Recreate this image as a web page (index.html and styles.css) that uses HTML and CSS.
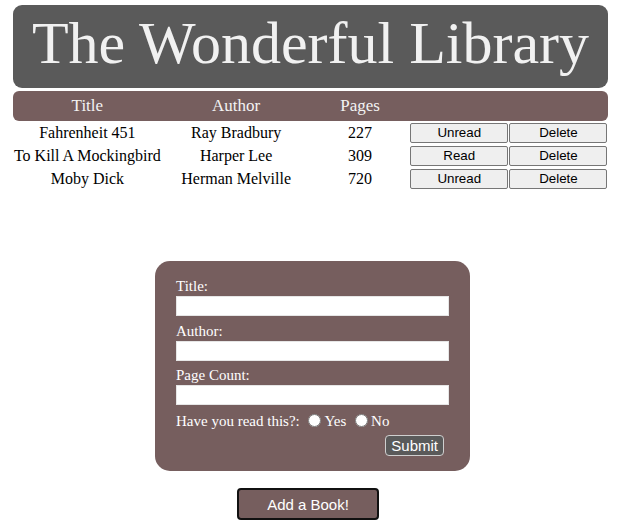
FILE: index.html
```html
<!DOCTYPE html>
<html>
<head>
<meta charset="utf-8">
<title>The Wonderful Library</title>
<link rel="stylesheet" href="styles.css">
</head>
<body>
<div class="page">
  <header class="banner">
    <h1 class="banner-title">The Wonderful Library</h1>
  </header>

  <section class="books">
    <div class="books-head">
      <div class="cell">Title</div>
      <div class="cell">Author</div>
      <div class="cell">Pages</div>
      <div class="cell"></div>
      <div class="cell"></div>
    </div>
    <div class="book-row">
      <div class="cell">Fahrenheit 451</div>
      <div class="cell">Ray Bradbury</div>
      <div class="cell">227</div>
      <button class="row-btn">Unread</button>
      <button class="row-btn">Delete</button>
    </div>
    <div class="book-row">
      <div class="cell">To Kill A Mockingbird</div>
      <div class="cell">Harper Lee</div>
      <div class="cell">309</div>
      <button class="row-btn">Read</button>
      <button class="row-btn">Delete</button>
    </div>
    <div class="book-row">
      <div class="cell">Moby Dick</div>
      <div class="cell">Herman Melville</div>
      <div class="cell">720</div>
      <button class="row-btn">Unread</button>
      <button class="row-btn">Delete</button>
    </div>
  </section>

  <form class="book-form">
    <label class="field-label" for="title">Title:</label>
    <input class="field-input" id="title" type="text">
    <label class="field-label" for="author">Author:</label>
    <input class="field-input" id="author" type="text">
    <label class="field-label" for="pages">Page Count:</label>
    <input class="field-input" id="pages" type="text">
    <div class="read-line">Have you read this?: <input type="radio" name="read" id="yes"><label for="yes">Yes</label> <input type="radio" name="read" id="no"><label for="no">No</label></div>
    <div class="submit-line"><button type="button" class="submit-btn">Submit</button></div>
  </form>

  <div class="add-line">
    <button class="add-btn">Add a Book!</button>
  </div>
</div>
</body>
</html>
```

FILE: styles.css
```css
html, body {
  margin: 0;
  padding: 0;
  background: #ffffff;
}

body {
  font-family: "Liberation Serif", "Times New Roman", serif;
  font-size: 16px;
  color: #000000;
}

.page {
  padding: 5px 11px 0 13px;
  display: flex;
  flex-direction: column;
}

.banner {
  background: #5a5a5a;
  border-radius: 9px;
  padding: 4px 0 10px;
}

.banner-title {
  margin: 0;
  font-weight: normal;
  font-size: 60px;
  line-height: 69px;
  text-align: center;
  color: #f1f1f1;
}

.books {
  margin-top: 3px;
  display: flex;
  flex-direction: column;
}

.books-head,
.book-row {
  display: grid;
  grid-template-columns: 3fr 3fr 2fr 2fr 2fr;
  align-items: center;
  text-align: center;
}

.books-head {
  background: #765e5e;
  border-radius: 6px;
  height: 30px;
  color: #f3f3f3;
  font-size: 17px;
}

.book-row {
  height: 23px;
}

.cell {
  white-space: nowrap;
}

.row-btn {
  justify-self: center;
  width: 98px;
  height: 20px;
  margin: 0;
  padding: 0;
  background: #efefef;
  border: 1px solid #767676;
  border-radius: 2px;
  font-family: "Liberation Sans", Arial, sans-serif;
  font-size: 13.333px;
  color: #000000;
}

.book-form {
  align-self: center;
  margin: 71px 0 0 4px;
  width: 315px;
  box-sizing: border-box;
  padding: 16px 21px 15px;
  background: #765e5e;
  border-radius: 15px;
  color: #ffffff;
  font-size: 15px;
  display: flex;
  flex-direction: column;
}

.field-label {
  line-height: 18px;
}

.field-input {
  margin: 1px 0 5.5px;
  height: 20px;
  box-sizing: border-box;
  border: 1px solid #e6e6e6;
  background: #ffffff;
  padding: 1px 2px;
}

.read-line {
  line-height: 18px;
  margin-top: 0.5px;
  white-space: nowrap;
}

.read-line input {
  margin: 3px 3px 0 5px;
  width: 13px;
  height: 13px;
  vertical-align: -1px;
}

.submit-line {
  display: flex;
  justify-content: flex-end;
  margin-top: 5px;
  padding-right: 5px;
}

.submit-btn {
  margin: 0;
  padding: 1px 5px;
  background: #5a5a5a;
  color: #ffffff;
  border: 1px solid #cfcfcf;
  border-radius: 4px;
  font-family: "Liberation Sans", Arial, sans-serif;
  font-size: 15px;
  line-height: 17px;
}

.add-line {
  display: flex;
  justify-content: center;
  margin-top: 17px;
}

.add-btn {
  margin: 0 0 0 -5px;
  width: 142px;
  height: 32px;
  padding: 0;
  background: #765e5e;
  color: #ffffff;
  border: 2px solid #111111;
  border-radius: 4px;
  font-family: "Liberation Sans", Arial, sans-serif;
  font-size: 15px;
}
```
